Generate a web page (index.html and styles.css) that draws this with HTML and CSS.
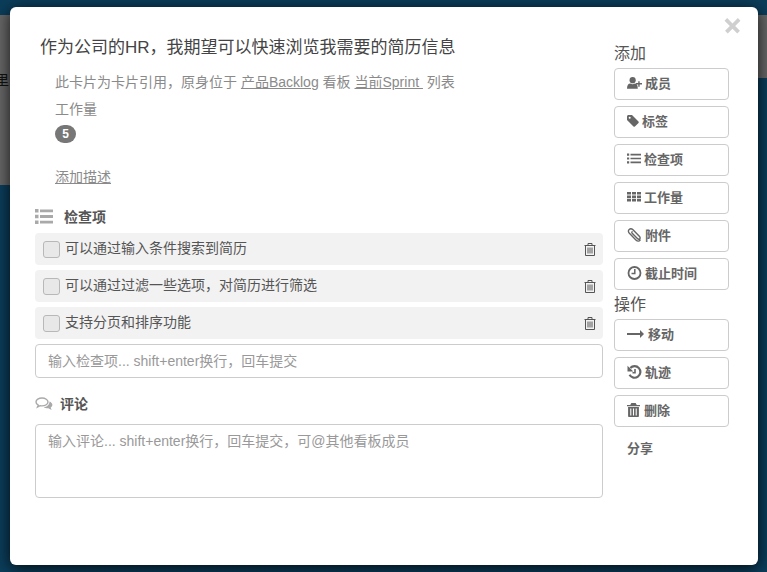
FILE: index.html
```html
<!DOCTYPE html>
<html lang="zh-CN">
<head>
<meta charset="utf-8">
<title>卡片详情</title>
<link rel="stylesheet" href="styles.css">
</head>
<body>
<div class="board">
  <div class="board-top"></div>
  <div class="board-row">
    <div class="stub-left"><span class="stub-text">里</span></div>
    <div class="stub-right"></div>
  </div>
</div>
<div class="modal">
  <svg class="close" viewBox="0 0 16 16"><path d="M3 1 8 6l5-5 2.500 2.500L10.500 8.500l4.500 4.500L12.500 15.500 8 11l-4.500 4.500L1 13l4.500-4.500L.5 3.500z" fill="#cfcfcf"/></svg>
  <main class="main">
    <h1 class="title">作为公司的HR，我期望可以快速浏览我需要的简历信息</h1>
    <p class="ref">此卡片为卡片引用，原身位于 <a class="link">产品Backlog</a> 看板 <a class="link">当前Sprint&nbsp;</a> 列表</p>
    <div class="field">工作量</div>
    <span class="badge">5</span>
    <a class="link desc">添加描述</a>
    <h2 class="section check-head">
      <svg class="sec-icon" viewBox="0 0 18 15"><path fill="#a9a9a9" d="M0 0h3.500v3.500H0zM0 5.700h3.500v3.500H0zM0 11.400h3.500v3.500H0zM5 .4h13v2.800H5zM5 6.100h13v2.800H5zM5 11.800h13v2.800H5z"/></svg>
      检查项
    </h2>
    <ul class="items">
      <li class="item"><span class="box"></span><span class="item-text">可以通过输入条件搜索到简历</span><svg class="trash" viewBox="0 0 12 13"><path fill="none" stroke="#555" d="M.5 2.500h11M4 2.500V.5h4v2M1.500 2.500v10h9v-10M4 4.500v6M6 4.500v6M8 4.500v6"/></svg></li>
      <li class="item"><span class="box"></span><span class="item-text">可以通过过滤一些选项，对简历进行筛选</span><svg class="trash" viewBox="0 0 12 13"><path fill="none" stroke="#555" d="M.5 2.500h11M4 2.500V.5h4v2M1.500 2.500v10h9v-10M4 4.500v6M6 4.500v6M8 4.500v6"/></svg></li>
      <li class="item"><span class="box"></span><span class="item-text">支持分页和排序功能</span><svg class="trash" viewBox="0 0 12 13"><path fill="none" stroke="#555" d="M.5 2.500h11M4 2.500V.5h4v2M1.500 2.500v10h9v-10M4 4.500v6M6 4.500v6M8 4.500v6"/></svg></li>
    </ul>
    <input class="input" placeholder="输入检查项... shift+enter换行，回车提交">
    <h2 class="section comment-head">
      <svg class="com-icon" viewBox="0 0 18 14"><path fill="none" stroke="#a9a9a9" stroke-width="1.400" d="M7 1C3.700 1 1 2.800 1 5c0 1.300.9 2.400 2.200 3.100L2.500 10l2.600-1.300c.6.100 1.200.2 1.900.2 3.300 0 6-1.800 6-3.900S10.300 1 7 1z"/><path fill="#a9a9a9" d="M14.500 4.500c1.600.7 2.900 1.900 2.900 3.300 0 1.100-.7 2-1.700 2.700l.9 2.500-3.300-1.700c-1.500.1-3.400-.3-4.500-1.100 3 0 5.700-2.400 5.700-5.700z"/></svg>
      评论
    </h2>
    <textarea class="textarea" placeholder="输入评论... shift+enter换行，回车提交，可@其他看板成员"></textarea>
  </main>
  <aside class="side">
    <h3 class="side-label">添加</h3>
    <button class="btn"><svg class="ic ic-w15" viewBox="0 0 16 14"><circle cx="6" cy="4" r="3.300" fill="#666"/><path fill="#666" d="M0 13c0-3.500 1.500-5.500 3.500-5.500 1.500 1 3.500 1 5 0 1.700 0 3 1.500 3 5.500z"/><path fill="#666" d="M12 5h1.500v2H16v1.500h-2.500V11H12V8.500H9.500V7H12z"/></svg>成员</button>
    <button class="btn"><svg class="ic ic-tag" viewBox="0 0 12 12"><path fill="#666" d="M0 1.500C0 .7.700 0 1.500 0H5l6.500 6.500c.4.400.4 1 0 1.400L7.900 11.500c-.4.400-1 .4-1.400 0L0 5zM2.700 1.700a1 1 0 1 0 0 2 1 1 0 0 0 0-2z" fill-rule="evenodd"/></svg>标签</button>
    <button class="btn"><svg class="ic ic-list" viewBox="0 0 14 11"><path fill="#666" d="M0 .5h2.200v2.200H0zM0 4.400h2.200v2.200H0zM0 8.300h2.200v2.200H0zM3.500 .8H14v1.600H3.500zM3.500 4.700H14v1.600H3.500zM3.500 8.600H14v1.600H3.500z"/></svg>检查项</button>
    <button class="btn"><svg class="ic ic-list" viewBox="0 0 14 11"><path fill="#666" d="M0 1h4v2.600H0zM5 1h4v2.600H5zM10 1h4v2.600h-4zM0 4.400h4V7H0zM5 4.400h4V7H5zM10 4.400h4V7h-4zM0 7.800h4v2.600H0zM5 7.800h4v2.600H5zM10 7.800h4v2.600h-4z"/></svg>工作量</button>
    <button class="btn"><svg class="ic ic-w15" viewBox="0 0 14 15"><path fill="none" stroke="#666" stroke-width="1.500" stroke-linecap="round" d="M13 13c-1 1.500-3 1.300-4.200.1L1.500 5.700C.2 4.300.1 2.700 1.300 1.600s2.800-.9 4.100.4l7 7.200c.9 1 .8 1.900.1 2.500s-1.500.5-2.400-.4L4.500 5.600c-.5-.6-.5-1.100 0-1.500"/></svg>附件</button>
    <button class="btn"><svg class="ic ic-w15" viewBox="0 0 14 14"><circle cx="7" cy="7" r="6" fill="none" stroke="#666" stroke-width="1.800"/><path fill="none" stroke="#666" stroke-width="1.500" d="M7.300 3v4.500H4"/></svg>截止时间</button>
    <h3 class="side-label ops">操作</h3>
    <button class="btn"><svg class="ic ic-arrow" viewBox="0 0 17 8"><path fill="#666" d="M0 3h13V0l4 4-4 4V5H0z"/></svg>移动</button>
    <button class="btn"><svg class="ic ic-w15" viewBox="0 0 14 14"><path fill="none" stroke="#666" stroke-width="2.200" d="M2.800 3A5.800 5.800 0 1 1 2 9.800"/><path fill="#666" d="M0 0.800 5.800 6.500H0z"/><path fill="none" stroke="#666" stroke-width="1.600" d="M7.500 4v3.700H5"/></svg>轨迹</button>
    <button class="btn"><svg class="ic ic-trash" viewBox="0 0 12 14" preserveAspectRatio="none"><path fill="#666" d="M4 0h4l1 2h3v1.300H0V2h3zM1 4h10v9c0 .6-.4 1-1 1H2c-.6 0-1-.4-1-1zM3 5.500v7h1v-7zM5.500 5.500v7h1v-7zM8 5.500v7h1v-7z" fill-rule="evenodd"/></svg>删除</button>
    <div class="share">分享</div>
  </aside>
</div>
</body>
</html>
```
FILE: styles.css
```css
* { box-sizing: border-box; }
html, body { margin: 0; height: 100%; overflow: hidden; }
body {
  background: #0b3d5a;
  font-family: "Liberation Sans", "Noto Sans CJK SC", sans-serif;
  color: #333;
}
.board { height: 572px; display: flex; flex-direction: column; }
.board-top { height: 15px; }
.board-row { display: flex; justify-content: space-between; align-items: flex-start; }
.stub-left {
  width: 20px; height: 170px; overflow: hidden;
  background: #666; color: #111; font-size: 14px; line-height: 20px;
  padding-top: 55px;
}
.stub-text { display: block; margin-left: -5px; }
.stub-right { width: 20px; height: 63px; background: #666; }

.modal {
  position: absolute; left: 10px; top: 7px; width: 748px; height: 558px;
  background: #fff; border-radius: 6px;
  box-shadow: 0 3px 15px rgba(0, 0, 0, .8);
  display: flex; padding-left: 25px; gap: 11px;
}
.close { position: absolute; left: 714px; top: 10px; width: 17px; height: 17px; }

.main { width: 568px; display: flex; flex-direction: column; align-items: flex-start; }
.title { margin: 30px 0 0 5px; font-size: 17px; line-height: 22px; font-weight: 400; color: #444; }
.ref { margin: 13px 0 0 20px; font-size: 14px; line-height: 20px; color: #8a8a8a; }
.link { color: #8a8a8a; text-decoration: underline; }
.field { margin: 7px 0 0 20px; font-size: 14px; line-height: 20px; color: #8a8a8a; }
.badge {
  margin: 6px 0 0 20px; width: 21px; height: 18px; border-radius: 9px;
  background: #777; color: #fff; font-size: 12px; font-weight: 700;
  line-height: 18px; text-align: center;
}
.desc { margin: 24px 0 0 20px; font-size: 14px; line-height: 20px; }
.section {
  margin: 0; font-size: 14px; font-weight: 700; line-height: 20px; color: #555;
  display: flex; align-items: center;
}
.check-head { margin-top: 20px; }
.sec-icon { width: 18px; height: 15px; margin-right: 11px; margin-top: -1px; }
.items { list-style: none; margin: 6px 0 0; padding: 0; width: 100%; display: flex; flex-direction: column; gap: 5px; }
.item {
  height: 32px; background: #f2f2f2; border-radius: 4px;
  display: flex; align-items: center; padding: 0 7px 0 8px;
}
.box {
  width: 17px; height: 17px; background: #e8e8e8; border: 1px solid #b8b8b8;
  border-radius: 3px; margin-right: 5px; flex: none;
}
.item-text { flex: 1; font-size: 14px; line-height: 20px; padding-bottom: 2px; color: #555; }
.trash { width: 12px; height: 13px; }
.input, .textarea {
  display: block; width: 100%; border: 1px solid #ccc; border-radius: 4px;
  font: 14px "Liberation Sans", "Noto Sans CJK SC", sans-serif; color: #555;
  padding: 0 12px; outline: 0; background: #fff;
}
.input { height: 34px; margin-top: 5px; padding-bottom: 0; }
.textarea { height: 74px; margin-top: 10px; padding: 6px 12px; resize: none; line-height: 20px; }
.input::placeholder, .textarea::placeholder { color: #999; opacity: 1; }
.comment-head { margin-top: 16px; }
.com-icon { width: 18px; height: 14px; margin-right: 7px; margin-top: -1px; }

.side { width: 115px; padding-top: 37px; display: flex; flex-direction: column; }
.side-label { margin: 0 0 4px; font-size: 16px; line-height: 20px; font-weight: 400; color: #555; }
.ops { margin-top: -1px; margin-bottom: 4px; }
.btn {
  height: 32px; width: 115px; margin-bottom: 6px; padding: 0 0 3px 12px;
  display: flex; align-items: center; gap: 3px;
  background: #fff; border: 1px solid #ccc; border-radius: 4px;
  font: 700 13px "Liberation Sans", "Noto Sans CJK SC", sans-serif; color: #666;
}
.ops + .btn .ic { margin-right: 1px; }
.ic { flex: none; }
.ic-w15 { width: 15px; height: 14px; }
.ic-tag { width: 12px; height: 12px; }
.ic-list { width: 14px; height: 11px; }
.ic-arrow { width: 17px; height: 8px; }
.ic-trash { width: 13px; height: 14px; margin-right: 1px; }
.share { padding: 7px 0 0 13px; font-size: 13px; font-weight: 700; line-height: 18px; color: #666; }
```
